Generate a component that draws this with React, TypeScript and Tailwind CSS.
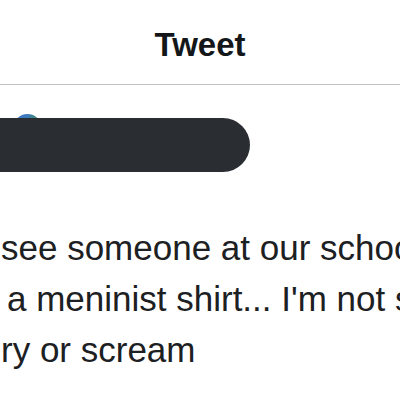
export default function App() {
  return (
    <div className="relative h-[400px] w-[400px] overflow-hidden bg-white font-['Liberation_Sans',Arial,sans-serif]">
      <header className="flex h-[85px] items-center justify-center border-b border-[#c2c2c2] pt-[4px]">
        <h1 className="text-[33px] font-bold leading-none text-[#14171a]">Tweet</h1>
      </header>

      <div className="relative mt-[33px]">
        {/* avatar peeking out from behind the redaction */}
        <div className="absolute left-[13px] top-[-4px] h-[29px] w-[29px] rounded-full bg-gradient-to-r from-[#3b6fc4] via-[#3d7bbd] to-[#4f8a3c]" />
        <div className="relative h-[54px] w-[250px] rounded-r-full bg-[#2a2e33]" />
      </div>

      <div className="mt-[50px] whitespace-nowrap text-[35px] leading-[51px] text-[#1c2022]">
        <p className="ml-[1px]">see someone at our school</p>
        <p className="ml-[7px]">a meninist shirt... I'm not sure</p>
        <p className="ml-[1px]">ry or scream</p>
      </div>
    </div>
  );
}
